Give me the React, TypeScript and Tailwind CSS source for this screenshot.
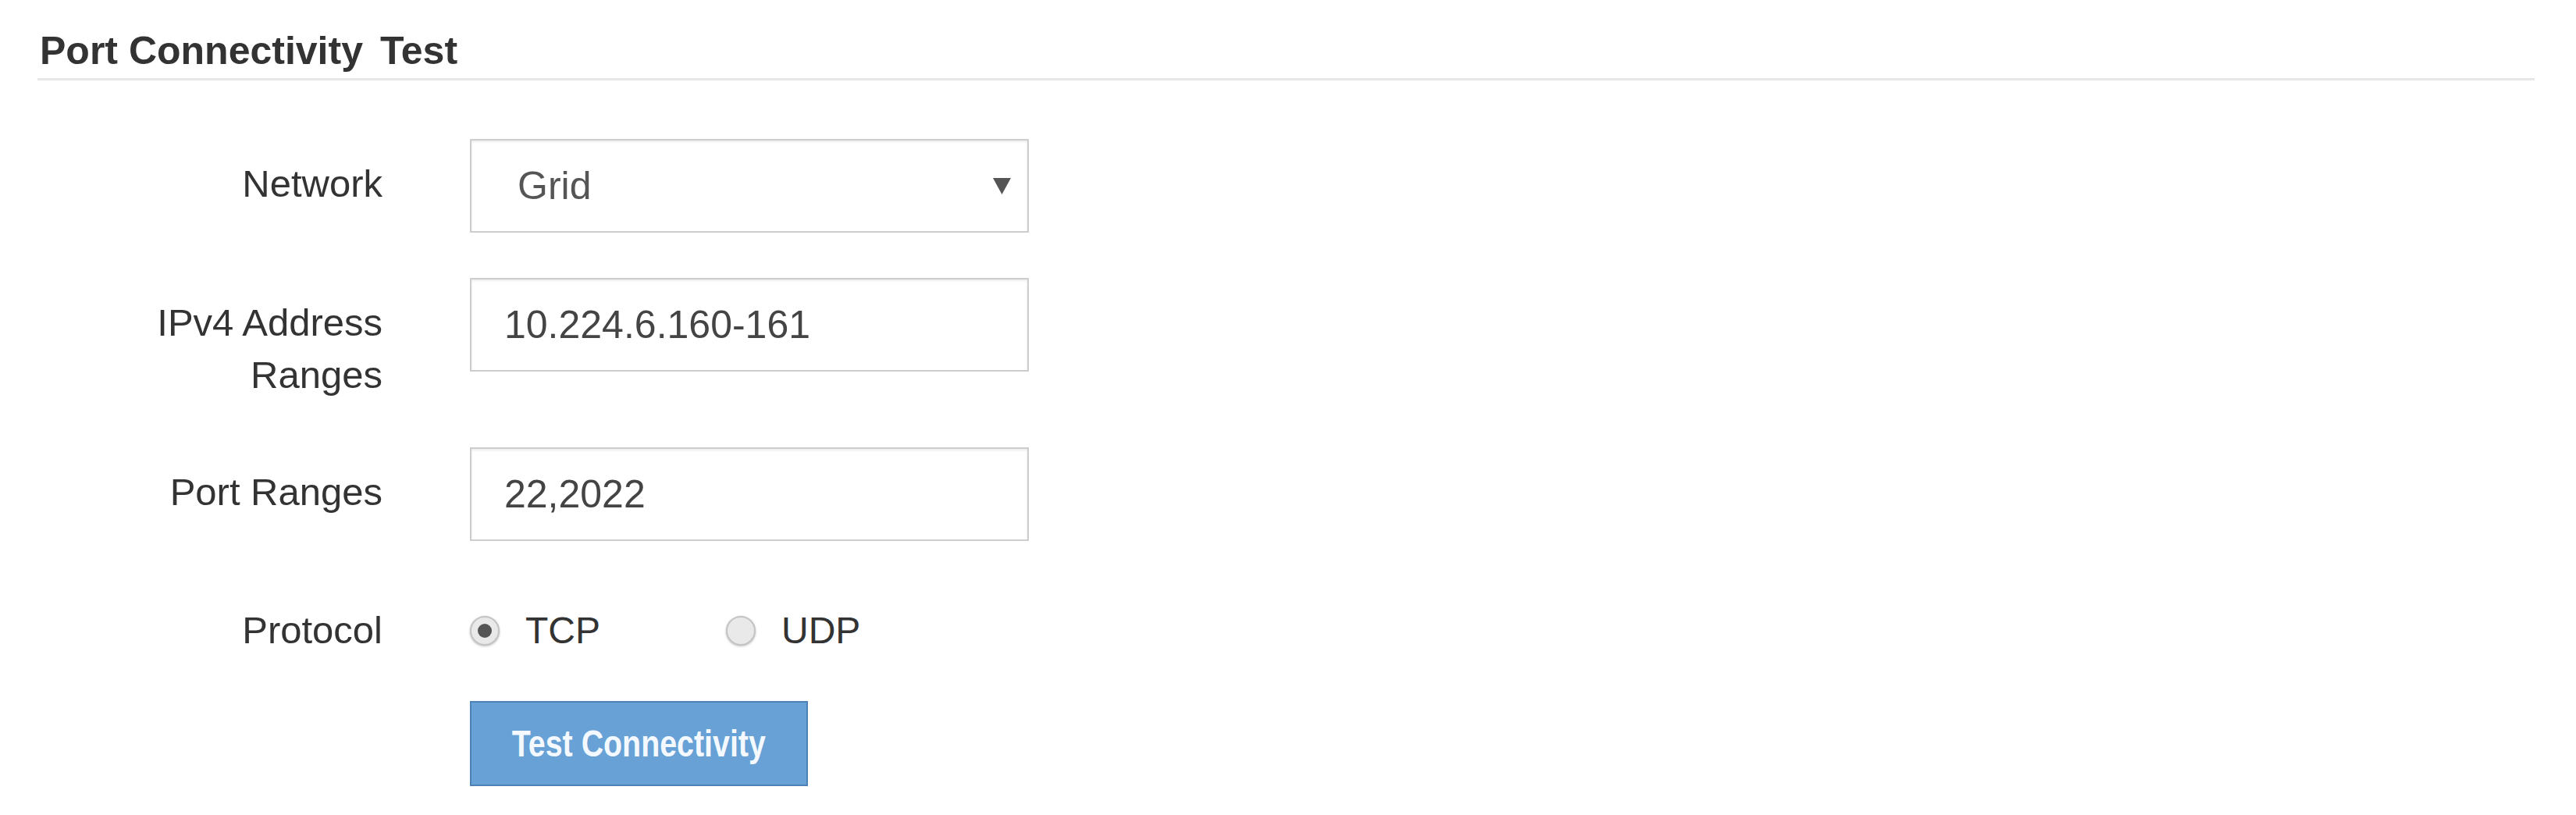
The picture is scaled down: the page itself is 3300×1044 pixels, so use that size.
import React from "react";

function Radio({ checked, label }: { checked: boolean; label: string }) {
  return (
    <div className="flex items-center">
      <span className="flex h-[38px] w-[38px] items-center justify-center rounded-full border-2 border-[#c4c4c4] bg-[#e9e9e9] shadow-[0_1px_3px_rgba(0,0,0,0.25)]">
        {checked && <span className="h-[18px] w-[18px] rounded-full bg-[#555555]" />}
      </span>
      <span className="ml-[33px] text-[48px] leading-[67px] text-[#333333]">{label}</span>
    </div>
  );
}

function Row({ label, children, className = "" }: { label: React.ReactNode; children: React.ReactNode; className?: string }) {
  return (
    <div className={`flex items-start ${className}`}>
      <div className="w-[442px] pt-[24px] text-right text-[49px] leading-[67px] text-[#333333]">{label}</div>
      <div className="ml-[112px]">{children}</div>
    </div>
  );
}

export default function App() {
  return (
    <div
      className="min-h-[1044px] w-[3300px] bg-white pl-[48px] pr-[53px]"
      style={{ fontFamily: '"Liberation Sans", Arial, sans-serif' }}
    >
      <div className="pt-[38px] pl-[3px]">
        <h1 className="text-[50px] font-bold leading-[54px] text-[#333333]">
          Port Connectivity<span className="ml-[22px]">Test</span>
        </h1>
      </div>
      <div className="mt-[8px] h-[3px] bg-[#e8e8e8]" />

      <div className="mt-[75px] flex flex-col">
        <Row label="Network">
          <div className="flex h-[120px] w-[716px] items-center justify-between border-2 border-[#cdcdcd] pl-[59px] pr-[21px] shadow-[inset_0_2px_3px_rgba(0,0,0,0.08)]">
            <span className="text-[50px] text-[#555555]">Grid</span>
            <svg width="23" height="21" viewBox="0 0 23 21">
              <polygon points="0,0 23,0 11.5,21" fill="#555555" />
            </svg>
          </div>
        </Row>

        <Row
          className="mt-[58px]"
          label={
            <>
              IPv4 Address
              <br />
              Ranges
            </>
          }
        >
          <div className="flex h-[120px] w-[716px] items-center border-2 border-[#cdcdcd] pl-[42px] shadow-[inset_0_2px_3px_rgba(0,0,0,0.08)]">
            <span className="text-[50px] text-[#444444]">10.224.6.160-161</span>
          </div>
        </Row>

        <Row className="mt-[59px]" label="Port Ranges">
          <div className="flex h-[120px] w-[716px] items-center border-2 border-[#cdcdcd] pl-[42px] shadow-[inset_0_2px_3px_rgba(0,0,0,0.08)]">
            <span className="text-[50px] text-[#444444]">22,2022</span>
          </div>
        </Row>

        <Row className="mt-[57px]" label="Protocol">
          <div className="flex h-[67px] items-center pt-[24px] box-content">
            <div className="w-[328px]">
              <Radio checked label="TCP" />
            </div>
            <Radio checked={false} label="UDP" />
          </div>
        </Row>

        <div className="ml-[554px] mt-[57px]">
          <div className="flex h-[109px] w-[433px] items-center justify-center border-2 border-[#4c82b5] bg-[#67a1d5]">
            <span className="inline-block scale-x-[0.82] text-[48px] font-bold text-[#f4f9ff]">Test Connectivity</span>
          </div>
        </div>
      </div>
    </div>
  );
}
